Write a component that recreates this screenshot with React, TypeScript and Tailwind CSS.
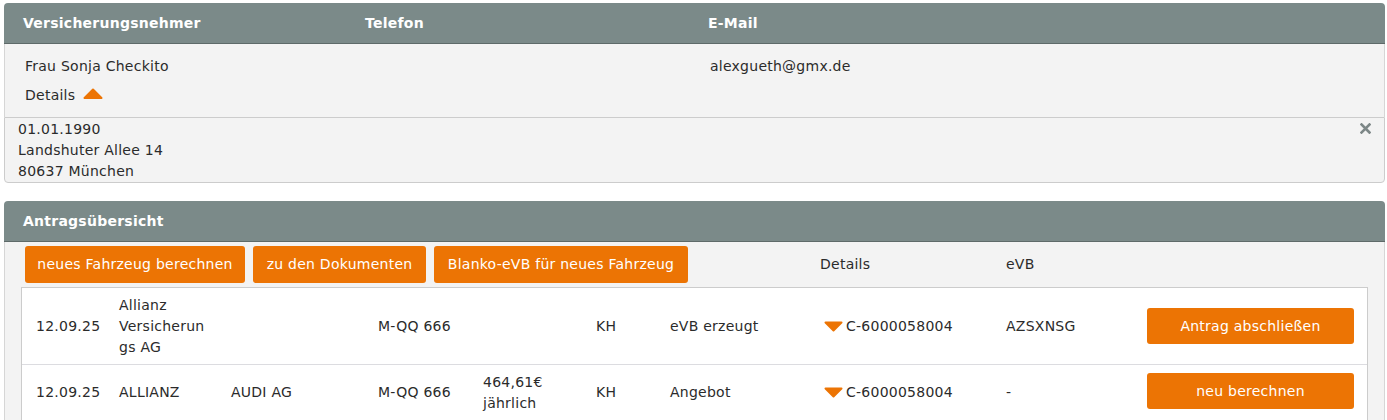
const ORANGE = "bg-[#ec7404]";

const TriUp = () => (
  <svg width="20" height="11" viewBox="0 0 20 11" className="inline-block">
    <path d="M1.5 10 L10 1.5 L18.5 10 Z" fill="#ec7404" stroke="#ec7404" strokeWidth="2" strokeLinejoin="round" />
  </svg>
);

const TriDown = () => (
  <svg width="19" height="11" viewBox="0 0 19 11" className="inline-block">
    <path d="M1.5 1.5 L17.5 1.5 L9.5 9.5 Z" fill="#ec7404" stroke="#ec7404" strokeWidth="2" strokeLinejoin="round" />
  </svg>
);

const CloseX = () => (
  <svg width="11" height="11" viewBox="0 0 11 11">
    <path d="M1.5 1.5 L9.5 9.5 M9.5 1.5 L1.5 9.5" stroke="#7d8787" strokeWidth="2.6" strokeLinecap="square" />
  </svg>
);

const rows = [
  {
    date: "12.09.25",
    insurer: "Allianz Versicherungs AG",
    maker: "",
    plate: "M-QQ 666",
    price: "",
    type: "KH",
    status: "eVB erzeugt",
    nr: "C-6000058004",
    evb: "AZSXNSG",
    action: "Antrag abschließen",
  },
  {
    date: "12.09.25",
    insurer: "ALLIANZ",
    maker: "AUDI AG",
    plate: "M-QQ 666",
    price: "464,61€ jährlich",
    type: "KH",
    status: "Angebot",
    nr: "C-6000058004",
    evb: "-",
    action: "neu berechnen",
  },
];

export default function App() {
  return (
    <div className="min-h-[420px] bg-white pl-[4px] pr-[2px] pt-[3px] text-[14px] leading-[21px] tracking-[0.25px] text-[#2b2b2b] font-['DejaVu_Sans',Verdana,sans-serif]">
      {/* Versicherungsnehmer */}
      <div className="rounded-t-[4px] overflow-hidden">
        <div className="h-[41px] bg-[#7b8a89] border-b border-[#5e6a69] grid grid-cols-[342px_343px_1fr] pl-[19px] items-center font-bold text-white">
          <div>Versicherungsnehmer</div>
          <div>Telefon</div>
          <div>E-Mail</div>
        </div>
        <div className="bg-[#f3f3f3] border-x border-[#d6d6d6] h-[73px] grid grid-cols-[342px_343px_1fr] pl-[20px] pt-[12px]">
          <div>
            <div>Frau Sonja Checkito</div>
            <div className="mt-[8px] flex items-center gap-[8px]">
              <span>Details</span>
              <span className="-mt-[5px]"><TriUp /></span>
            </div>
          </div>
          <div />
          <div>alexgueth@gmx.de</div>
        </div>
      </div>
      <div className="relative bg-[#f3f3f3] border border-[#cccccc] rounded-b-[4px] h-[66px] pl-[13px] pt-[1px]">
        <div>01.01.1990</div>
        <div>Landshuter Allee 14</div>
        <div>80637 München</div>
        <button className="absolute right-[13px] top-[5px]">
          <CloseX />
        </button>
      </div>

      {/* Antragsübersicht */}
      <div className="mt-[18px] rounded-t-[4px] overflow-hidden">
        <div className="h-[41px] bg-[#7b8a89] border-b border-[#5e6a69] flex items-center pl-[19px] font-bold text-white">
          Antragsübersicht
        </div>
        <div className="bg-[#f3f3f3] border-x border-[#d6d6d6] pl-[16px] pr-[16px]">
          <div className="flex items-center h-[41px] pt-[4px] pl-[4px]">
            <div className="flex gap-[8px]">
              <button className={`${ORANGE} text-white rounded-[3px] h-[37px] w-[220px]`}>neues Fahrzeug berechnen</button>
              <button className={`${ORANGE} text-white rounded-[3px] h-[37px] w-[173px]`}>zu den Dokumenten</button>
              <button className={`${ORANGE} text-white rounded-[3px] h-[37px] w-[254px]`}>Blanko-eVB für neues Fahrzeug</button>
            </div>
            <div className="ml-[132px] w-[186px]">Details</div>
            <div>eVB</div>
          </div>
          <div className="mt-[4px] bg-white border border-[#cccccc]">
            {rows.map((r, i) => (
              <div
                key={i}
                className={`grid grid-cols-[83px_112px_147px_105px_113px_74px_154px_182px_141px_207px] items-center pl-[14px] ${
                  i === 0 ? "h-[76px]" : "h-[56px] border-t border-[#dcdce0]"
                }`}
              >
                <div>{r.date}</div>
                <div className="pr-[22px] [overflow-wrap:anywhere]">{r.insurer}</div>
                <div>{r.maker}</div>
                <div>{r.plate}</div>
                <div className="pr-[30px]">{r.price}</div>
                <div>{r.type}</div>
                <div>{r.status}</div>
                <div className="flex items-center gap-[3px]">
                  <TriDown />
                  <span>{r.nr}</span>
                </div>
                <div>{r.evb}</div>
                <div className="flex flex-col">
                  <button className={`${ORANGE} text-white rounded-[3px] h-[36px] w-[207px] ${i === 1 ? "-mt-[3px]" : ""}`}>{r.action}</button>
                </div>
              </div>
            ))}
          </div>
        </div>
      </div>
    </div>
  );
}
